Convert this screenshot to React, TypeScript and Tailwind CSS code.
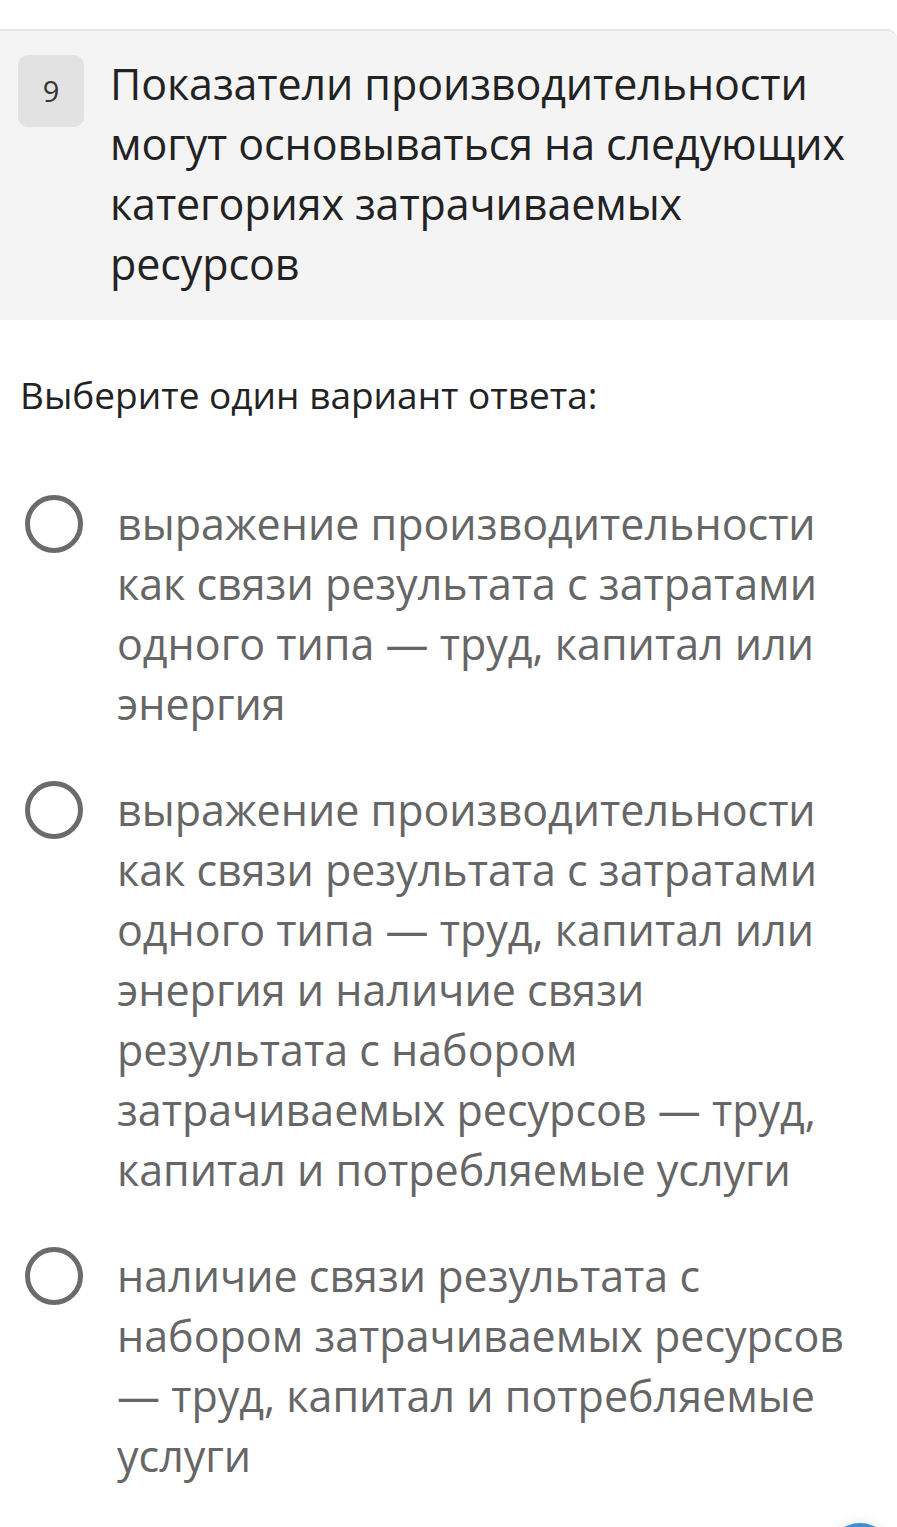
import React from "react";

const font = { fontFamily: '"Open Sans", "Noto Sans", sans-serif' };

function Lines({ lines }: { lines: string[] }) {
  return (
    <>
      {lines.map((l, i) => (
        <span key={i} className="block whitespace-nowrap">
          {l}
        </span>
      ))}
    </>
  );
}

function Radio() {
  return (
    <div className="shrink-0 w-[58px] h-[58px] rounded-full border-[5px] border-[#6b6b6b] -mt-[2px]" />
  );
}

const options: string[][] = [
  [
    "выражение производительности",
    "как связи результата с затратами",
    "одного типа — труд, капитал или",
    "энергия",
  ],
  [
    "выражение производительности",
    "как связи результата с затратами",
    "одного типа — труд, капитал или",
    "энергия и наличие связи",
    "результата с набором",
    "затрачиваемых ресурсов — труд,",
    "капитал и потребляемые услуги",
  ],
  [
    "наличие связи результата с",
    "набором затрачиваемых ресурсов",
    "— труд, капитал и потребляемые",
    "услуги",
  ],
];

export default function App() {
  return (
    <div
      className="relative w-[897px] h-[1527px] overflow-hidden bg-white font-['Open_Sans',sans-serif]"
      style={font}
    >
      <div className="h-[29px]" />
      <div className="bg-[#f4f4f4] border-t-2 border-[#e4e4e4] rounded-tr-[10px] pt-[24px] pb-[26px] flex">
        <div className="ml-[18px] w-[66px] h-[72px] rounded-[10px] bg-[#e2e2e2] flex items-center justify-center text-[29px] text-[#333] shrink-0">
          9
        </div>
        <div className="ml-[26px] text-[43px] leading-[60px] text-[#222] -mt-[1px] tracking-[-0.1px]">
          <Lines
            lines={[
              "Показатели производительности",
              "могут основываться на следующих",
              "категориях затрачиваемых",
              "ресурсов",
            ]}
          />
        </div>
      </div>
      <div className="pl-[20px] pt-[50px] text-[37px] leading-[50px] text-[#222]">
        Выберите один вариант ответа:
      </div>
      <div className="flex flex-col gap-[49px] pt-[77px]">
        {options.map((o, i) => (
          <div key={i} className="flex items-start pl-[25px]">
            <Radio />
            <div className="ml-[34px] text-[43px] leading-[60px] text-[#666] -mt-[3px]">
              <Lines lines={o} />
            </div>
          </div>
        ))}
      </div>
      <div className="absolute left-[828px] top-[1523px] w-[64px] h-[64px] rounded-full bg-[#3a8fd6] shadow-[0_0_12px_rgba(0,0,0,0.12)]" />
    </div>
  );
}
